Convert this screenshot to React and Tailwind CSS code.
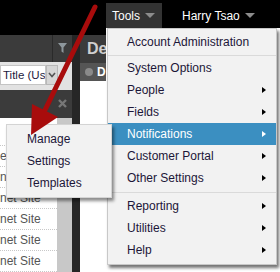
import React from 'react';

const font = { fontFamily: '"Liberation Sans", Arial, sans-serif' };

const menuItems = [
  { label: 'Account Administration' },
  { sep: 'h-[4px]' },
  { label: 'System Options' },
  { label: 'People', sub: true },
  { label: 'Fields', sub: true },
  { label: 'Notifications', sub: true, active: true },
  { label: 'Customer Portal', sub: true },
  { label: 'Other Settings', sub: true },
  { sep: 'h-[6px]' },
  { label: 'Reporting', sub: true },
  { label: 'Utilities', sub: true },
  { label: 'Help', sub: true },
];

// rows under the flyout only show their first few pixels
const listRows = [
  { text: '', hidden: true },
  { text: 'et Site', hidden: true },
  { text: 'net Site', hidden: true },
  { text: 'net Site' },
  { text: 'net Site' },
  { text: 'net Site' },
  { text: 'net Site' },
];

const DownCaret = () => (
  <span className="inline-block w-0 h-0 border-l-[5px] border-r-[5px] border-t-[5px] border-l-transparent border-r-transparent border-t-[#8c8c8c]" />
);

const SubCaret = ({ active }) => (
  <span
    className={
      'w-0 h-0 border-t-[3.5px] border-b-[3.5px] border-l-[4px] border-t-transparent border-b-transparent ' +
      (active ? 'border-l-white' : 'border-l-black')
    }
  />
);

const App = () => {
  return (
    <div className="relative w-[280px] h-[272px] overflow-hidden bg-white text-[12px]" style={font}>
      {/* top bar */}
      <div className="h-[28px] bg-black flex items-end">
        <div className="w-[106px]" />
        <div className="w-[56px] h-[25px] bg-[#333] flex items-center pl-[6px] text-white">
          Tools
          <span className="ml-[5px] flex">
            <DownCaret />
          </span>
        </div>
        <div className="h-[25px] ml-[20px] flex items-center text-white">
          Harry Tsao
          <span className="ml-[5px] flex">
            <DownCaret />
          </span>
        </div>
      </div>

      {/* page body */}
      <div className="flex h-[244px]">
        <div className="w-[106px] bg-black pt-[7px] flex">
          {/* left panel */}
          <div className="w-[72px] flex flex-col">
            <div className="h-[29px] bg-[#3b3b3b] flex">
              <div className="w-[53px] border-r border-[#2a2a2a]" />
              <div className="flex-1 flex items-center justify-center pb-[2px]">
                <svg width="9" height="10" viewBox="0 0 9 10">
                  <path d="M0 0H9L5.5 4.5V10L3.5 8.5V4.5Z" fill="#8d979c" />
                </svg>
              </div>
            </div>
            <div className="h-[29px] bg-[#e2e2e2] flex items-start pt-[3px]">
              <div className="w-[46px] h-[20px] bg-white border border-[#c4c4c4] overflow-hidden whitespace-nowrap pl-[2px] flex items-center text-[11.5px] text-[#241a40]">
                Title (Us
              </div>
              <div className="w-[12px] h-[20px] bg-[#d6d6d6] border border-[#b8b8b8] flex items-center justify-center">
                <svg width="8" height="6" viewBox="0 0 8 6">
                  <path d="M1 1L4 4.5L7 1" stroke="#555" strokeWidth="1.6" fill="none" />
                </svg>
              </div>
            </div>
            <div className="h-[30px] bg-[#3b3b3b] flex items-center justify-end pr-[5px]">
              <svg width="9" height="9" viewBox="0 0 9 9">
                <path d="M1 1L8 8M8 1L1 8" stroke="#777" strokeWidth="2.4" />
              </svg>
            </div>
            <div className="flex-1 flex">
              <div className="w-[57px] bg-white pt-[7px] overflow-hidden">
                {listRows.map((row, i) => (
                  <div
                    key={i}
                    className="h-[21px] border-b border-dotted border-[#c8c8c8] flex items-center whitespace-nowrap text-[#555]"
                  >
                    {row.hidden ? (
                      <span className="w-[6px] overflow-hidden">{row.text}</span>
                    ) : (
                      row.text
                    )}
                  </div>
                ))}
              </div>
              <div className="w-[15px] bg-[#c8c8c8]" />
            </div>
          </div>

          <div className="w-[8px] bg-[#262626]" />

          {/* De panel */}
          <div className="flex-1 flex flex-col overflow-hidden">
            <div className="h-[28px] bg-[#3b3b3b] flex items-center pl-[7px] text-[16px] font-bold text-[#cfcfcf] whitespace-nowrap">
              De
            </div>
            <div className="h-[18px] bg-[#555] flex items-center pl-[5px] gap-[4px]">
              <span className="w-[8px] h-[8px] rounded-full bg-[#8a8a8a]" />
              <span className="text-white font-bold text-[12px]">D</span>
            </div>
            <div className="flex-1 bg-white" />
          </div>
        </div>
        <div className="flex-1 bg-white" />
      </div>

      {/* Tools dropdown */}
      <div className="absolute left-[107px] top-[28px] w-[170px] bg-[#f2f2f2] border border-[#c8c8c8] shadow-[2px_3px_3px_rgba(0,0,0,0.55)] pt-[2px] pb-[3px] text-[#1c1638]">
        {menuItems.map((item, i) =>
          item.sep ? (
            <div key={i} className={item.sep + ' flex items-center'}>
              <div className="w-full h-px bg-[#dadada]" />
            </div>
          ) : (
            <div
              key={i}
              className={
                'h-[22px] flex items-center justify-between pl-[19px] pr-[10px] ' +
                (item.active ? 'bg-[#3b8fc1] text-white' : '')
              }
            >
              <span>{item.label}</span>
              {item.sub && <SubCaret active={item.active} />}
            </div>
          )
        )}
      </div>

      {/* Notifications flyout */}
      <div className="absolute left-[6px] top-[124px] w-[106px] bg-[#f2f2f2] border border-[#d4d4d4] shadow-[2px_3px_3px_rgba(0,0,0,0.45)] pt-[3px] pb-[3px] text-[#1c1638]">
        {['Manage', 'Settings', 'Templates'].map((t) => (
          <div key={t} className="h-[22px] flex items-center pl-[20px]">
            {t}
          </div>
        ))}
      </div>

      {/* red callout arrow */}
      <svg className="absolute left-0 top-0 pointer-events-none" width="280" height="272" viewBox="0 0 280 272">
        <line x1="95" y1="7" x2="45" y2="110" stroke="#a80c0c" strokeWidth="5" strokeLinecap="round" />
        <polygon points="58,117 32,104 31,135" fill="#a80c0c" />
      </svg>
    </div>
  );
};

export default App;
